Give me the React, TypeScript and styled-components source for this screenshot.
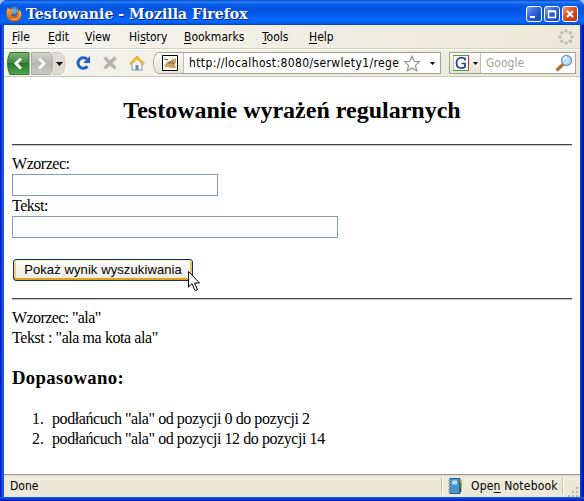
import React from 'react';
import styled, { createGlobalStyle } from 'styled-components';

const GlobalStyle = createGlobalStyle`
  *, *::before { box-sizing: border-box; }
  body { margin: 0; background: #a9bfe9; overflow: hidden; }
`;

const uiFont = `'DejaVu Sans Condensed', 'DejaVu Sans', sans-serif`;

const Window = styled.div`
  position: relative;
  width: 584px;
  height: 501px;
  display: flex;
  flex-direction: column;
  border-radius: 7px 7px 0 0;
  overflow: hidden;
  padding: 0 4px 4px;
  background:
    linear-gradient(#1660ee, #0a3cd8 50%, #0019a8) bottom / 100% 4px no-repeat,
    linear-gradient(90deg, #0019c8 0, #0019c8 1px, #0a3ce0 1px, #1660ee 4px, #1660ee 580px, #0a48dc 580px, #0019a8 583px, #00138c 584px);
  font-family: ${uiFont};
  font-stretch: condensed;
  font-size: 12px;
  color: #000;
`;

const TitleBar = styled.header`
  height: 25px;
  flex: none;
  margin: 0 -4px;
  padding: 3px 6px 0 6px;
  display: flex;
  align-items: center;
  background: linear-gradient(#0743c6 0, #2a82fa 2px, #0a63ee 4px, #0453de 8px, #0459ea 14px, #0768ff 20px, #0560f4 23px, #0440bf 25px);
`;

const Title = styled.h1`
  flex: 1;
  margin: 0 0 0 4px;
  color: #fff;
  font: bold 14px/20px 'DejaVu Serif', serif;
  letter-spacing: 0.04px;
  white-space: pre;
  text-shadow: 1px 1px 0 #0a2a86;
`;

const CaptionButton = styled.button<{ $close?: boolean }>`
  width: 16px;
  height: 16px;
  margin-left: 2px;
  padding: 0;
  display: flex;
  border: 1px solid #fff;
  border-radius: 3px;
  background: ${p => p.$close
    ? 'linear-gradient(135deg, #f09a80, #dc4f28 45%, #b83410)'
    : 'linear-gradient(135deg, #7da4f5, #2d63df 45%, #1746c2)'};
  svg { display: block; }
`;

const MenuBar = styled.nav`
  height: 24px;
  flex: none;
  display: flex;
  align-items: center;
  padding-left: 8px;
  background: linear-gradient(90deg, #f5f4ef, #ece9d8);
  border-bottom: 1px solid #d5d2c3;
`;

const MenuItem = styled.span<{ $w: number }>`
  width: ${p => p.$w}px;
  flex: none;
  line-height: 20px;
  u { text-underline-offset: 2px; text-decoration-thickness: 1px; }
`;

const Throbber = styled.svg`
  margin-left: auto;
  margin-right: 6px;
`;

const Toolbar = styled.div`
  height: 28px;
  flex: none;
  display: flex;
  align-items: center;
  padding: 0 4px 0 3px;
  border-top: 1px solid #fff;
  border-bottom: 1px solid #c9c6b5;
  background: linear-gradient(90deg, #f4f3ee, #ece9d8);
`;

const NavCluster = styled.svg`
  flex: none;
  margin-right: 9px;
`;

const ToolIcon = styled.svg<{ $gap: number }>`
  flex: none;
  margin-right: ${p => p.$gap}px;
`;

const Field = styled.div<{ $w: number; $round?: boolean }>`
  width: ${p => p.$w}px;
  height: 22px;
  flex: none;
  display: flex;
  align-items: center;
  background: #fff;
  border: 1px solid #a5a294;
  border-radius: ${p => (p.$round ? '6px 0 0 6px / 11px 0 0 11px' : '0')};
  overflow: hidden;
`;

const SearchField = styled(Field)`
  margin-left: auto;
`;

const FieldLead = styled.div<{ $w: number; $pad: number }>`
  width: ${p => p.$w}px;
  height: 20px;
  flex: none;
  padding-left: ${p => p.$pad}px;
  display: flex;
  align-items: center;
  gap: 3px;
  border-right: 1px solid #c2bfb0;
  background: linear-gradient(#fbfaf7, #e6e3d4);
`;

const FieldText = styled.span<{ $ls: number; $muted?: boolean }>`
  flex: 1;
  padding-left: 5px;
  line-height: 20px;
  white-space: pre;
  letter-spacing: ${p => p.$ls}px;
  color: ${p => (p.$muted ? '#a5a297' : '#000')};
`;

const Star = styled.svg`
  flex: none;
  margin-right: 7px;
`;

const DropArrow = styled.svg`
  flex: none;
  margin-right: 3px;
`;

const Page = styled.main`
  flex: 1;
  min-height: 0;
  padding: 18px 8px 0;
  background: #fff;
  font: 16px/20px 'Liberation Serif', serif;
`;

const Heading = styled.h2`
  margin: 0 0 19px;
  text-align: center;
  font-size: 24px;
  line-height: 30px;
  white-space: nowrap;
`;

const Rule = styled.hr`
  height: 2px;
  margin: 0;
  border: 0;
  border-top: 1px solid #444;
  border-bottom: 1px solid #c8c8c8;
`;

const Form = styled.form`
  display: flex;
  flex-direction: column;
  align-items: flex-start;
  padding: 8px 0 17px;
`;

const Label = styled.label`
  letter-spacing: -0.47px;
`;

const Input = styled.input<{ $w: number }>`
  width: ${p => p.$w}px;
  height: 22px;
  padding: 0 3px;
  border: 1px solid #7f9db9;
  background: #fff;
`;

const Submit = styled.button`
  width: 180px;
  height: 22px;
  margin: 21px 0 0 1px;
  padding: 0;
  border: 1px solid #0c3560;
  border-radius: 3px;
  background: linear-gradient(#fdfdfb, #ebeae2);
  box-shadow: inset 0 1px #fff0cf, inset 0 -2px #e5a01a, inset 2px 0 #fbd07c, inset -2px 0 #f5bd54;
  font: 13px/18px 'Liberation Sans', sans-serif;
  letter-spacing: 0.1px;
  color: #000;
  white-space: nowrap;
`;

const Results = styled.section`
  padding-top: 8px;
`;

const Line = styled.div<{ $ls: number }>`
  letter-spacing: ${p => p.$ls}px;
  white-space: pre;
`;

const SubHeading = styled.h3`
  margin: 18px 0 19px;
  font-size: 18.72px;
  line-height: 24px;
  letter-spacing: 0.36px;
`;

const List = styled.ol`
  margin: 0;
  padding: 0;
  list-style: none;
  counter-reset: match;
`;

const Match = styled.li`
  display: flex;
  letter-spacing: -0.43px;
  counter-increment: match;
  &::before {
    content: counter(match) '.';
    width: 40px;
    flex: none;
    padding-left: 20px;
    letter-spacing: 0;
  }
`;

const StatusBar = styled.footer`
  height: 23px;
  flex: none;
  display: flex;
  align-items: center;
  padding-left: 6px;
  border-top: 1px solid #9b998c;
  background: linear-gradient(#dedbcb 0, #f0eee2 3px, #ece9d8 8px, #ece9d8);
`;

const StatusText = styled.span`
  flex: 1;
`;

const NotebookPanel = styled.div`
  width: 122px;
  height: 18px;
  display: flex;
  align-items: center;
  gap: 8px;
  padding-left: 4px;
  border-left: 1px solid #c5c2b2;
  border-right: 1px solid #c5c2b2;
  box-shadow: inset 1px 0 #fff, 1px 0 #fff;
  letter-spacing: 0.2px;
  white-space: nowrap;
  u { text-underline-offset: 2px; }
`;

const Grip = styled.svg`
  flex: none;
  align-self: flex-end;
  margin-left: 4px;
`;

const Pointer = styled.svg`
  position: absolute;
  left: 188px;
  top: 271px;
`;

const throbberDots = Array.from({ length: 8 }, (_, i) => {
  const a = (i * Math.PI) / 4;
  return { x: 8 + Math.cos(a) * 6, y: 8 + Math.sin(a) * 6 };
});

const FirefoxIcon = () => (
  <svg width="16" height="16" viewBox="0 0 16 16">
    <defs>
      <radialGradient id="globe" cx=".5" cy=".3"><stop offset="0" stopColor="#7cc4ee" /><stop offset="1" stopColor="#173a7c" /></radialGradient>
      <linearGradient id="fur" x2="0" y2="1"><stop offset="0" stopColor="#f7b23e" /><stop offset="1" stopColor="#cf5312" /></linearGradient>
    </defs>
    <circle cx="8" cy="7.6" r="7" fill="url(#globe)" />
    <path d="M1.8 1.6 3.6 3.2 6.3 3 5.5 5 7.8 6 6.3 7.3 4.9 7.7C5.3 9.8 7 11 9 10.5c2-.5 2.8-2 2.6-4L10.5 4c1.5.3 2.2 1.2 2.4 2l.3-2.6c2 2 2.7 4.4 2.1 6.8C14.3 14 11.3 15.8 8 15.7 3.7 15.5.7 12.5.6 8.3.5 5.7.8 3.3 1.8 1.6Z" fill="url(#fur)" />
    <path d="M14 5c1 3 0 6-2 7.5-2 1.3-4.8 1.3-6.7.2" fill="none" stroke="#ffd25a" strokeWidth="1" />
  </svg>
);

const MENU = [
  { pre: '', key: 'F', post: 'ile', w: 36 },
  { pre: '', key: 'E', post: 'dit', w: 37 },
  { pre: '', key: 'V', post: 'iew', w: 44 },
  { pre: 'Hi', key: 's', post: 'tory', w: 55 },
  { pre: '', key: 'B', post: 'ookmarks', w: 78 },
  { pre: '', key: 'T', post: 'ools', w: 47 },
  { pre: '', key: 'H', post: 'elp', w: 40 },
];

export default function App() {
  return (
    <>
      <GlobalStyle />
      <Window>
        <TitleBar>
          <FirefoxIcon />
          <Title>Testowanie - Mozilla Firefox</Title>
          <CaptionButton aria-label="Minimize">
            <svg width="14" height="14"><path d="M3 10h5" stroke="#fff" strokeWidth="2" /></svg>
          </CaptionButton>
          <CaptionButton aria-label="Maximize">
            <svg width="14" height="14"><path d="M3.5 4.5h7v6h-7zM3 4h8" fill="none" stroke="#fff" strokeWidth="1.5" /></svg>
          </CaptionButton>
          <CaptionButton $close aria-label="Close">
            <svg width="14" height="14"><path d="m4 4 6 6m0-6-6 6" stroke="#fff" strokeWidth="2" /></svg>
          </CaptionButton>
        </TitleBar>

        <MenuBar>
          {MENU.map(m => (
            <MenuItem key={m.key + m.post} $w={m.w}>{m.pre}<u>{m.key}</u>{m.post}</MenuItem>
          ))}
          <Throbber width="16" height="16">
            {throbberDots.map((d, i) => <circle key={i} cx={d.x} cy={d.y} r="1.8" fill="#bfbdb3" />)}
          </Throbber>
        </MenuBar>

        <Toolbar>
          <NavCluster width="59" height="23" viewBox="0 0 59 23">
            <defs>
              <linearGradient id="back" x2="0" y2="1"><stop offset="0" stopColor="#79b474" /><stop offset=".48" stopColor="#43893f" /><stop offset=".5" stopColor="#27752a" /><stop offset="1" stopColor="#4faa49" /></linearGradient>
              <linearGradient id="fwd" x2="0" y2="1"><stop offset="0" stopColor="#d4d4d1" /><stop offset=".5" stopColor="#b5b5b2" /><stop offset="1" stopColor="#c8c8c4" /></linearGradient>
            </defs>
            <path d="M45 .5h8q5 2 5 11t-5 11h-8z" fill="#dddbd2" stroke="#cfcdc3" />
            <path d="M3 .5h19v22H3Q.5 18 .5 11.5T3 .5Z" fill="url(#back)" stroke="#397338" />
            <path d="M24.5.5H43q2.5 5 2.5 11t-2.5 11H24.5Z" fill="url(#fwd)" stroke="#aaa9a4" />
            <path d="m14 6.5-5 5 5 5" fill="none" stroke="#fff" strokeWidth="3" />
            <path d="m32 6.5 5 5-5 5" fill="none" stroke="#f4f4f2" strokeWidth="3" />
            <path d="M49 10h7l-3.5 4Z" fill="#000" />
          </NavCluster>
          <ToolIcon $gap={10} width="17" height="16" viewBox="0 0 17 16">
            <path d="M12.5 11.3A5.3 5.3 0 1 1 12 4.2" fill="none" stroke="#1f61c4" strokeWidth="3" />
            <path d="M15 1v7H8.2Z" fill="#1f61c4" />
          </ToolIcon>
          <ToolIcon $gap={11} width="16" height="16" viewBox="0 0 16 16">
            <path d="m2.5 2.5 11 11m0-11-11 11" stroke="#b4b3ad" strokeWidth="3.4" />
          </ToolIcon>
          <ToolIcon $gap={8} width="16" height="16" viewBox="0 0 16 16">
            <path d="M3 8v7h10V8L8 3Z" fill="#f3f7fb" stroke="#879bb2" />
            <path d="M6.5 10h3v5h-3Z" fill="#74889f" />
            <path d="M8 1 .6 8.3 2 9.6l6-5.4 6 5.4 1.400-1.300Z" fill="#fbc53a" stroke="#dc9820" strokeWidth=".8" />
          </ToolIcon>
          <Field $w={288} $round>
            <FieldLead $w={30} $pad={8}>
              <svg width="16" height="16" viewBox="0 0 16 16">
                <path d="M.5.5h15v15H.5z" fill="#fffef4" stroke="#000" />
                <path d="m2 11 3-4 4-1 1-3 1.500 1.500L14 3v4l-1 3 1 3H9l-3-1-4 1 2-2Z" fill="#c9a268" />
                <path d="m6 7 2 2m0-3 1 2m1-1h1m1 1-2 1M2 4l4 1" stroke="#684b2a" />
              </svg>
            </FieldLead>
            <FieldText $ls={0.37}>http://localhost:8080/serwlety1/rege</FieldText>
            <Star width="18" height="17" viewBox="0 0 18 17">
              <path d="m9 1.300 2.200 5 5.300.5-4 3.600 1.200 5.300L9 13l-4.700 2.700 1.200-5.300-4-3.600 5.300-.5Z" fill="#fff" stroke="#96948d" strokeWidth="1.2" />
            </Star>
            <DropArrow width="9" height="5"><path d="M2 1h5L4.500 4Z" /></DropArrow>
          </Field>
          <SearchField $w={127}>
            <FieldLead $w={31} $pad={3}>
              <svg width="16" height="16" viewBox="0 0 16 16">
                <path d="M0 0h16v16H0z" fill="#fff" />
                <path d="M0 15.5V.5h15" fill="none" stroke="#3ba448" />
                <path d="M15.5 0v15" stroke="#d52a26" />
                <path d="M0 15.5h16" stroke="#3ba448" />
                <path d="M12 5.5V2.700M12 4C9 1.400 3.500 2.500 3.500 8s5 6 8.500 4V8.500H8.500" fill="none" stroke="#233f97" strokeWidth="1.7" />
              </svg>
              <svg width="7" height="5"><path d="M1 1h5L3.500 4Z" /></svg>
            </FieldLead>
            <FieldText $ls={0} $muted>Google</FieldText>
            <svg width="20" height="18" viewBox="0 0 20 18">
              <path d="m2.500 15.500 6-5.500" stroke="#b76b2d" strokeWidth="3.2" strokeLinecap="round" />
              <circle cx="11.5" cy="6.5" r="5" fill="#b9def8" stroke="#6f9bc6" strokeWidth="1.4" />
              <path d="M8.500 6a3 3 0 0 1 3-3" fill="none" stroke="#fff" strokeWidth="1.5" />
            </svg>
          </SearchField>
        </Toolbar>

        <Page>
          <Heading>Testowanie wyrażeń regularnych</Heading>
          <Rule />
          <Form onSubmit={e => e.preventDefault()}>
            <Label htmlFor="pattern">Wzorzec:</Label>
            <Input id="pattern" $w={206} />
            <Label htmlFor="text">Tekst:</Label>
            <Input id="text" $w={326} />
            <Submit>Pokaż wynik wyszukiwania</Submit>
          </Form>
          <Rule />
          <Results>
            <Line $ls={-0.6}>Wzorzec: "ala"</Line>
            <Line $ls={-0.42}>Tekst : "ala ma kota ala"</Line>
            <SubHeading>Dopasowano:</SubHeading>
            <List>
              <Match>podłańcuch "ala" od pozycji 0 do pozycji 2</Match>
              <Match>podłańcuch "ala" od pozycji 12 do pozycji 14</Match>
            </List>
          </Results>
        </Page>

        <StatusBar>
          <StatusText>Done</StatusText>
          <NotebookPanel>
            <svg width="17" height="16" viewBox="0 0 17 16">
              <path d="M4 .5h10v15H4z" fill="#4e92cb" stroke="#25577f" />
              <path d="M14.5 2v12" stroke="#2f3b3c" strokeWidth="1.5" />
              <path d="M15 2v3" stroke="#e5bb36" strokeWidth="1.5" /><path d="M15 6v3" stroke="#60a850" strokeWidth="1.5" />
              <path d="M6 2.5h5v4H6z" fill="#b7dcf3" />
              <path d="M2 2.500h3m-3 3h3m-3 3h3m-3 3h3m-3 2.500h3" stroke="#8fa0ad" />
            </svg>
            <span>Ope<u>n</u> Notebook</span>
          </NotebookPanel>
          <Grip width="13" height="13">
            <path d="M9 3h2v2H9zM5 7h2v2H5zM9 7h2v2H9zM1 11h2v2H1zM5 11h2v2H5zM9 11h2v2H9z" fill="#bbb7a3" />
          </Grip>
        </StatusBar>

        <Pointer width="14" height="22" viewBox="0 0 14 22">
          <path d="M.5.5v15.500l3.500-3.300 3 7 2.500-1.200-3-6.500h5Z" fill="#fff" stroke="#000" />
        </Pointer>
      </Window>
    </>
  );
}
